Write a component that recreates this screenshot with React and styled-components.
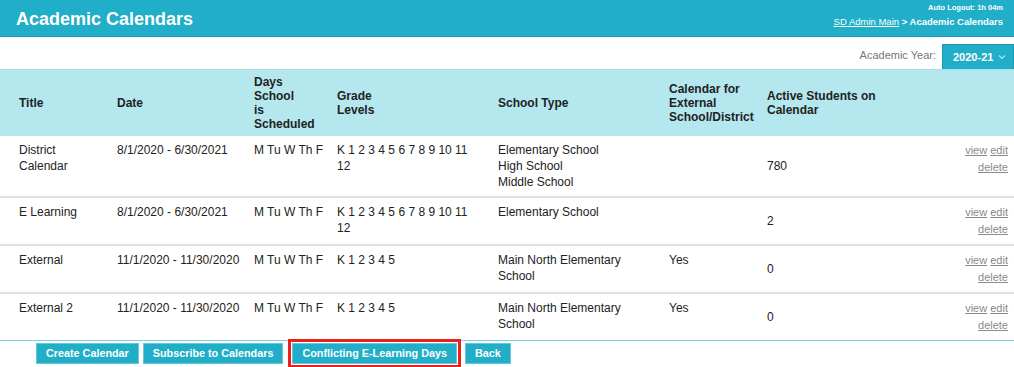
import React from 'react'
import styled, { createGlobalStyle } from 'styled-components'

const GlobalStyle = createGlobalStyle`
  html, body {
    margin: 0;
    padding: 0;
    background: #fff;
    font-family: "Liberation Sans", Arial, sans-serif;
  }
`

const calendars = [
  {
    title: ['District', 'Calendar'],
    date: '8/1/2020 - 6/30/2021',
    days: 'M Tu W Th F',
    grades: ['K 1 2 3 4 5 6 7 8 9 10 11', '12'],
    schools: ['Elementary School', 'High School', 'Middle School'],
    external: '',
    students: '780'
  },
  {
    title: ['E Learning'],
    date: '8/1/2020 - 6/30/2021',
    days: 'M Tu W Th F',
    grades: ['K 1 2 3 4 5 6 7 8 9 10 11', '12'],
    schools: ['Elementary School'],
    external: '',
    students: '2'
  },
  {
    title: ['External'],
    date: '11/1/2020 - 11/30/2020',
    days: 'M Tu W Th F',
    grades: ['K 1 2 3 4 5'],
    schools: ['Main North Elementary', 'School'],
    external: 'Yes',
    students: '0'
  },
  {
    title: ['External 2'],
    date: '11/1/2020 - 11/30/2020',
    days: 'M Tu W Th F',
    grades: ['K 1 2 3 4 5'],
    schools: ['Main North Elementary', 'School'],
    external: 'Yes',
    students: '0'
  }
]

const App = () => {
  return (
    <Page>
      <GlobalStyle />
      <TopBar>
        <PageTitle>Academic Calendars</PageTitle>
        <TopRight>
          <Logout>Auto Logout: 1h 04m</Logout>
          <Crumbs>
            <a href="#">SD Admin Main</a> &gt; Academic Calendars
          </Crumbs>
        </TopRight>
      </TopBar>

      <YearRow>
        <YearLabel>Academic Year:</YearLabel>
        <YearSelect>
          2020-21
          <svg width="8" height="6" viewBox="0 0 8 6">
            <path d="M1 1.5 L4 4.5 L7 1.5" fill="none" stroke="#b8e6ee" strokeWidth="1.1" />
          </svg>
        </YearSelect>
      </YearRow>

      <Table>
        <colgroup>
          <col style={{ width: 111 }} />
          <col style={{ width: 137 }} />
          <col style={{ width: 83 }} />
          <col style={{ width: 161 }} />
          <col style={{ width: 171 }} />
          <col style={{ width: 98 }} />
          <col style={{ width: 162 }} />
          <col style={{ width: 91 }} />
        </colgroup>
        <thead>
          <tr>
            <Th first>Title</Th>
            <Th>Date</Th>
            <Th>Days<br />School<br />is<br />Scheduled</Th>
            <Th>Grade<br />Levels</Th>
            <Th>School Type</Th>
            <Th>Calendar for<br />External<br />School/District</Th>
            <Th>Active Students on<br />Calendar</Th>
            <Th />
          </tr>
        </thead>
        <tbody>
          {calendars.map((c, i) => (
            <Row key={i} last={i === calendars.length - 1}>
              <Td first>{c.title.map((t, j) => <div key={j}>{t}</div>)}</Td>
              <Td>{c.date}</Td>
              <Td>{c.days}</Td>
              <Td>{c.grades.map((g, j) => <div key={j}>{g}</div>)}</Td>
              <Td>{c.schools.map((s, j) => <div key={j}>{s}</div>)}</Td>
              <Td>{c.external}</Td>
              <Td middle>{c.students}</Td>
              <ActionCell>
                <div>
                  <ActionLink href="#">view</ActionLink> <ActionLink href="#">edit</ActionLink>
                </div>
                <div>
                  <ActionLink href="#">delete</ActionLink>
                </div>
              </ActionCell>
            </Row>
          ))}
        </tbody>
      </Table>

      <ButtonBar>
        <Button>Create Calendar</Button>
        <Button>Subscribe to Calendars</Button>
        <Highlight>
          <Button>Conflicting E-Learning Days</Button>
        </Highlight>
        <Button>Back</Button>
      </ButtonBar>
    </Page>
  )
}
export default App

const teal = '#21aec8'

const Page = styled.div`
  width: 1014px;
  color: #222;
  font-size: 12px;
`

const TopBar = styled.div`
  height: 36px;
  background: ${teal};
  border-bottom: 1px solid #1a9db5;
  display: flex;
  justify-content: space-between;
  align-items: center;
  padding: 0 11px 0 16px;
  color: #fff;
`

const PageTitle = styled.h1`
  margin: 2px 0 0;
  font-size: 18px;
  font-weight: bold;
`

const TopRight = styled.div`
  display: flex;
  flex-direction: column;
  align-items: flex-end;
  align-self: flex-start;
  padding-top: 3px;
`

const Logout = styled.div`
  font-size: 7.5px;
  font-weight: bold;
  line-height: 9px;
`

const Crumbs = styled.div`
  margin-top: 4px;
  font-size: 9.5px;
  font-weight: bold;
  line-height: 11px;
  a {
    color: #fff;
    font-weight: normal;
    text-decoration: underline;
  }
`

const YearRow = styled.div`
  height: 32px;
  display: flex;
  justify-content: flex-end;
  align-items: flex-end;
  gap: 6px;
`

const YearLabel = styled.span`
  color: #777;
  font-size: 11px;
  margin-bottom: 8px;
`

const YearSelect = styled.div`
  width: 72px;
  height: 25px;
  box-sizing: border-box;
  background: ${teal};
  border: 1px solid #1b9cb3;
  border-bottom: none;
  color: #fff;
  font-size: 11px;
  font-weight: bold;
  display: flex;
  align-items: center;
  gap: 5px;
  padding-left: 10px;
`

const Table = styled.table`
  width: 1014px;
  border-collapse: collapse;
  table-layout: fixed;
  border-top: 1px solid #a6dfe8;
  border-bottom: 1px solid #7ccfdd;
`

const Th = styled.th`
  background: #b4e7ee;
  height: 66px;
  box-sizing: border-box;
  padding: 0 6px 0 ${p => (p.first ? '19px' : '6px')};
  text-align: left;
  vertical-align: middle;
  font-size: 12px;
  line-height: 14px;
  font-weight: bold;
  color: #222;
`

const Row = styled.tr`
  border-bottom: ${p => (p.last ? 'none' : '2px solid #e1e1e1')};
`

const Td = styled.td`
  padding: 6px 6px 6px ${p => (p.first ? '19px' : '6px')};
  vertical-align: ${p => (p.middle ? 'middle' : 'top')};
  line-height: 16px;
  font-size: 12px;
  color: #222;
  white-space: nowrap;
`

const ActionCell = styled.td`
  padding: 6px 6px 6px 6px;
  vertical-align: top;
  text-align: right;
  line-height: 17px;
  font-size: 11px;
`

const ActionLink = styled.a`
  color: #8a8a8a;
  text-decoration: underline;
`

const ButtonBar = styled.div`
  display: flex;
  align-items: flex-start;
  gap: 4px;
  padding: 2px 0 0 36px;
`

const Button = styled.button`
  height: 21px;
  box-sizing: border-box;
  padding: 0 9px;
  background: ${teal};
  border: 1px solid #6cc6d6;
  color: #fff;
  font-family: "Liberation Sans", Arial, sans-serif;
  font-size: 10.8px;
  font-weight: bold;
  display: flex;
  align-items: center;
`

const Highlight = styled.div`
  margin: -4px 0 0 1px;
  border: 3px solid #e8231e;
  padding: 1px;
  display: flex;
`
